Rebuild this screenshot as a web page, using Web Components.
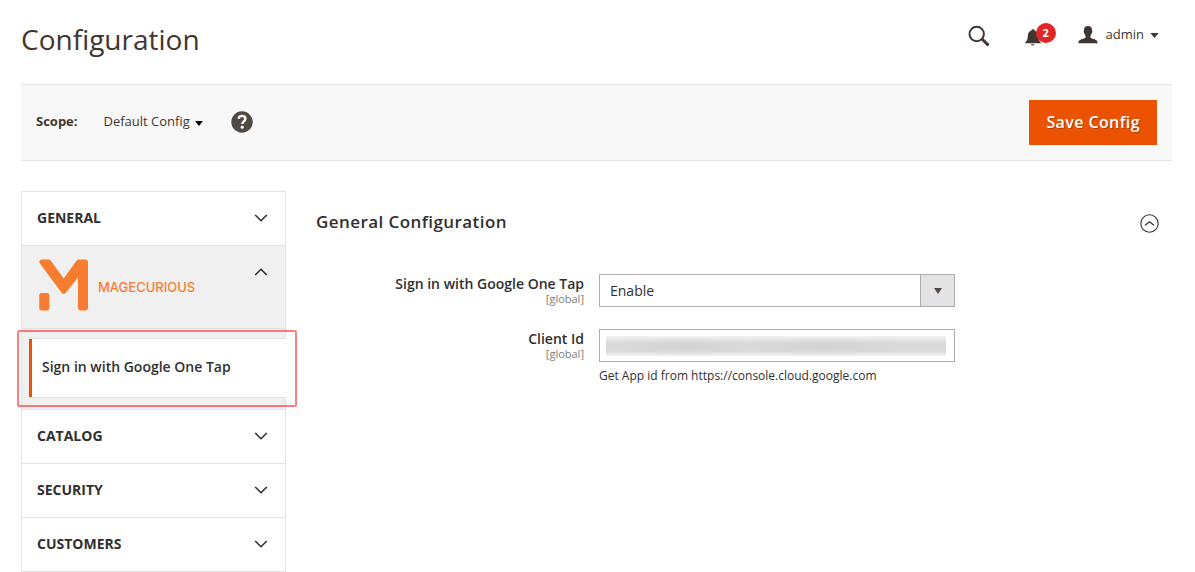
<!DOCTYPE html>
<html lang="en">
<head>
<meta charset="utf-8">
<title>Configuration</title>
<style>
  body { margin: 0; background: #fff; color: #303030; font: 14px/20px "Open Sans", "Noto Sans", sans-serif; }
</style>
</head>
<body>
<admin-page>
  <admin-header slot="header" heading="Configuration" user="admin" count="2"></admin-header>
  <scope-toolbar slot="toolbar" scope="Default Config"></scope-toolbar>
  <config-nav slot="nav">
    <nav-group>GENERAL</nav-group>
    <nav-group open>
      <brand-logo></brand-logo>
      <nav-item slot="items" href="#one-tap">Sign in with Google One Tap</nav-item>
    </nav-group>
    <nav-group>CATALOG</nav-group>
    <nav-group>SECURITY</nav-group>
    <nav-group>CUSTOMERS</nav-group>
  </config-nav>
  <config-section heading="General Configuration">
    <config-select label="Sign in with Google One Tap" options="Enable,Disable"></config-select>
    <config-secret label="Client Id">Get App id from https://console.cloud.google.com</config-secret>
  </config-section>
</admin-page>

<script>
const define = (name, render) => customElements.define(name, class extends HTMLElement {
  constructor() {
    super();
    this.attachShadow({ mode: "open" });
  }
  connectedCallback() {
    const t = document.createElement("template");
    t.innerHTML = `<style>
      *, :host { box-sizing: border-box; }
      button, select, input { font: inherit; color: inherit; margin: 0; border-radius: 0; }
      button { border: 0; padding: 0; background: none; cursor: pointer; }
      svg { display: block; flex: none; }
    </style>` + render(this);
    this.shadowRoot.replaceChildren(t.content.cloneNode(true));
  }
});

define("admin-page", () => `
  <style>
    :host { display: block; padding: 0 23px 0 21px; }
    .body { display: grid; grid-template-columns: 265px minmax(0, 1fr); gap: 30px; align-items: start; padding-top: 30px; }
  </style>
  <slot name="header"></slot>
  <slot name="toolbar"></slot>
  <div class="body"><slot name="nav"></slot><main><slot></slot></main></div>`);

define("admin-header", el => `
  <style>
    :host { display: flex; justify-content: space-between; height: 84px; color: #41362f; }
    h1 { margin: 0; padding-top: 21px; font-size: 28px; line-height: 36px; font-weight: 400; }
    .tools { display: flex; align-items: center; height: 72px; padding-right: 13px; }
    .bell { position: relative; margin: 0 31px 0 35px; width: 22px; height: 22px; }
    .badge { position: absolute; left: 11px; top: -2px; width: 20px; height: 20px; border-radius: 50%;
      background: #e22626; color: #fff; font-size: 11px; line-height: 20px; font-weight: 700; text-align: center; }
    .user { display: flex; align-items: center; margin-bottom: 2px; font-size: 13px; }
    .user span { margin: 0 6px 2px 8px; }
  </style>
  <h1>${el.getAttribute("heading")}</h1>
  <div class="tools">
    <button aria-label="Search"><svg width="22" height="22" viewBox="0 0 22 22" fill="none" stroke="currentColor">
      <circle cx="8.7" cy="9" r="7.2" stroke-width="2"/><path d="M14 14l6.5 6.3" stroke-width="3"/></svg></button>
    <button class="bell" aria-label="Notifications"><svg width="16" height="20" viewBox="0 0 16 20" fill="currentColor">
      <path d="M8 3.2c.9 0 1.5.5 1.6 1.3 2.3.7 3.5 2.6 3.6 5.2.1 3.300 .7 5.200 2.600 6.700v.9H.2v-.9c1.900-1.500 2.500-3.400 2.600-6.700.1-2.600 1.300-4.500 3.600-5.200C6.500 3.700 7.100 3.200 8 3.200zM5.900 18.200h3.400c-.2.900-.8 1.400-1.700 1.400s-1.500-.5-1.700-1.400z"/></svg>
      <span class="badge">${el.getAttribute("count")}</span></button>
    <button class="user"><svg width="20" height="18" viewBox="0 0 20 18" fill="currentColor">
      <path d="M10 0C7.400 0 5.900 1.600 6 4.200c0 .7-.5.700-.3 1.700.1.800.5.900.7 1.500.3 1.100.6 1.700 1.200 2.300v1.900c-1 1-3.300 1.400-5 2.100C1 14.300.4 15.300.3 17.300h19.400c-.1-2-.7-3-2.300-3.600-1.700-.7-4-1.100-5-2.100V9.700c.6-.6.9-1.200 1.200-2.300.2-.6.6-.7.7-1.500.2-1-.3-1-.3-1.700C14.100 1.600 12.600 0 10 0z"/></svg>
      <span>${el.getAttribute("user")}</span>
      <svg width="9" height="5" viewBox="0 0 9 5" fill="currentColor"><path d="M.3 0h8.400L4.500 5z"/></svg></button>
  </div>`);

define("scope-toolbar", el => `
  <style>
    :host { display: flex; align-items: center; height: 77px; padding: 0 15px; background: #f8f8f8; border: solid #e3e3e3; border-width: 1px 0; font-size: 13px; }
    b { color: #41362f; font-weight: 700; margin: -3px 26px 0 0; }
    .scope { display: flex; align-items: center; gap: 5px; margin-top: -3px; color: #41362f; }
    .scope svg { margin-top: 4px; color: #000; }
    .help { margin: -2px auto 0 28px; color: #514943; }
    .save { height: 45px; padding: 0 17px 2px; background: #eb5202; color: #fff; font-size: 16px; font-weight: 600; letter-spacing: .025em; text-shadow: 1px 1px 0 rgba(0,0,0,.25); }
  </style>
  <b>Scope:</b>
  <button class="scope">${el.getAttribute("scope")}<svg width="8" height="5" viewBox="0 0 8 5" fill="currentColor"><path d="M0 0h8L4 5z"/></svg></button>
  <button class="help" aria-label="Help"><svg width="22" height="22" viewBox="0 0 22 22">
    <circle cx="11" cy="11" r="10.700" fill="currentColor"/>
    <path d="M7.700 7.900C7.800 5.900 9.100 4.900 11 4.900c2 0 3.400 1.100 3.400 2.800 0 1.500-.8 2.200-1.800 2.900-.9.700-1.300 1.200-1.300 2.500" fill="none" stroke="#fff" stroke-width="2.400"/>
    <circle cx="11.200" cy="16.200" r="1.600" fill="#fff"/></svg></button>
  <button class="save">Save Config</button>`);

define("config-nav", () => `
  <style>
    :host { display: block; border: 1px solid #e3e3e3; border-bottom: 0; }
  </style>
  <nav aria-label="Configuration sections"><slot></slot></nav>`);

define("nav-group", el => {
  const open = el.hasAttribute("open");
  return `
  <style>
    :host { display: block; border-bottom: 1px solid #e3e3e3; }
    .head { display: flex; justify-content: space-between; width: 100%; padding: 16px 17px 17px 15px; line-height: 20px; font-weight: 700; text-align: left; }
    .head svg { margin-top: 5px; }
    .items { padding: 9px 0 11px 7px; border-top: 1px solid #e3e3e3; }
    :host([open]) { background: #f0f0f0; }
    :host([open]) .head { padding: 12px 17px 16px 15px; }
    :host([open]) .head svg { margin-top: 9px; }
  </style>
  <button class="head" aria-expanded="${open}"><slot></slot>
    <svg width="14" height="10" viewBox="0 0 14 10" fill="none" stroke="#303030" stroke-width="1.600">
      <path d="${open ? "M1.200 8L7 2.300 12.800 8" : "M1.200 2L7 7.700 12.800 2"}"/></svg></button>
  ${open ? `<div class="items"><slot name="items"></slot></div>` : ""}`;
});

define("brand-logo", () => `
  <style>
    :host { display: flex; align-items: center; gap: 9px; height: 54px; padding-left: 2px; color: #f67d2f; }
    span { padding-top: 3px; font: 500 13px/20px Inter, "Open Sans", sans-serif; }
  </style>
  <svg width="50" height="54" viewBox="0 0 50 54" fill="currentColor">
    <path d="M3 1.500h6.500c1 0 1.700.4 2.300 1.200L24.700 20.500 37.500 2.700c.6-.8 1.300-1.200 2.300-1.200H46c2 0 3 1 3 3v45c0 2-1 3-3 3h-4c-2 0-3-1-3-3V19.500L27 34.600c-1.500 1.900-3.100 1.900-4.600 0L.8 5.200C-.4 3.300.8 1.500 3 1.500z"/>
    <rect x=".3" y="35" width="10" height="17.500" rx="2.200"/></svg>
  <span>MAGECURIOUS</span>`);

/* The highlighted entry covers the panel's right border; the red frame lies over its surroundings. */
define("nav-item", el => `
  <style>
    :host { display: block; position: relative; margin-right: -1px; }
    a { display: block; padding: 18px 10px 20px 13px; border: solid #e3e3e3; border-width: 1px 0; background: linear-gradient(#eb5202, #eb5202) left / 3px 100% no-repeat border-box #fff; color: #303030; font-weight: 600; text-decoration: none; }
    .frame { position: absolute; inset: -8px -11px -9px -12px; border: 2px solid rgba(255, 0, 0, .5); border-radius: 2px; pointer-events: none; }
  </style>
  <a href="${el.getAttribute("href")}" aria-current="page"><slot></slot></a><div class="frame"></div>`);

define("config-section", el => `
  <style>
    :host { display: block; }
    header { display: flex; justify-content: space-between; align-items: center; height: 62px; padding-right: 13px; }
    header button { margin-top: 2px; }
    h2 { margin: 0; font-size: 17px; line-height: 24px; font-weight: 600; letter-spacing: .025em; }
    .fields { display: grid; gap: 22px; padding-top: 21px; }
  </style>
  <header><h2>${el.getAttribute("heading")}</h2>
    <button aria-label="Collapse section"><svg width="19" height="19" viewBox="0 0 19 19" fill="none" stroke="#303030">
      <circle cx="9.500" cy="9.500" r="8.700" stroke-width="1.100"/><path d="M5 11.300l4.500-3.600 4.500 3.600" stroke-width="1.200"/></svg></button></header>
  <div class="fields"><slot></slot></div>`);

const fieldStyle = `<style>
  :host { display: grid; grid-template-columns: 268fr 356fr 202fr; column-gap: 15px; }
  label { text-align: right; font-weight: 600; line-height: 19px; }
  label small { display: block; font-size: 11px; line-height: 12px; font-weight: 400; color: #808080; }
  .control { position: relative; }
  select, input { display: block; width: 100%; height: 33px; padding: 0 10px; border: 1px solid #adadad; background: #fff; }
</style>`;

define("config-select", el => `${fieldStyle}
  <style>
    select { appearance: none; padding-right: 44px; }
    .arrow { position: absolute; right: 1px; top: 1px; width: 34px; height: 31px; display: grid; place-items: center; background: #e3e3e3; border-left: 1px solid #adadad; pointer-events: none; }
  </style>
  <label for="field">${el.getAttribute("label")}<small>[global]</small></label>
  <div class="control"><select id="field">${el.getAttribute("options").split(",").map(o => `<option>${o}</option>`).join("")}</select>
    <span class="arrow"><svg width="8" height="6" viewBox="0 0 8 6" fill="#514943"><path d="M0 0h8L4 6z"/></svg></span></div>`);

define("config-secret", el => `${fieldStyle}
  <style>
    input { background:
      radial-gradient(closest-side, rgba(190,190,190,.25), transparent) 20px 7px / 130px 18px no-repeat,
      radial-gradient(closest-side, rgba(190,190,190,.25), transparent) 150px 7px / 150px 18px no-repeat,
      linear-gradient(#f2f2f2, #dadada 35%, #dadada 75%, #f2f2f2) 6px center / calc(100% - 14px) 20px no-repeat, #fff; }
    p { margin: 4px 0 0; font-size: 12px; line-height: 20px; }
  </style>
  <label for="field">${el.getAttribute("label")}<small>[global]</small></label>
  <div class="control"><input id="field" type="text" aria-describedby="note"><p id="note"><slot></slot></p></div>`);
</script>
</body>
</html>
